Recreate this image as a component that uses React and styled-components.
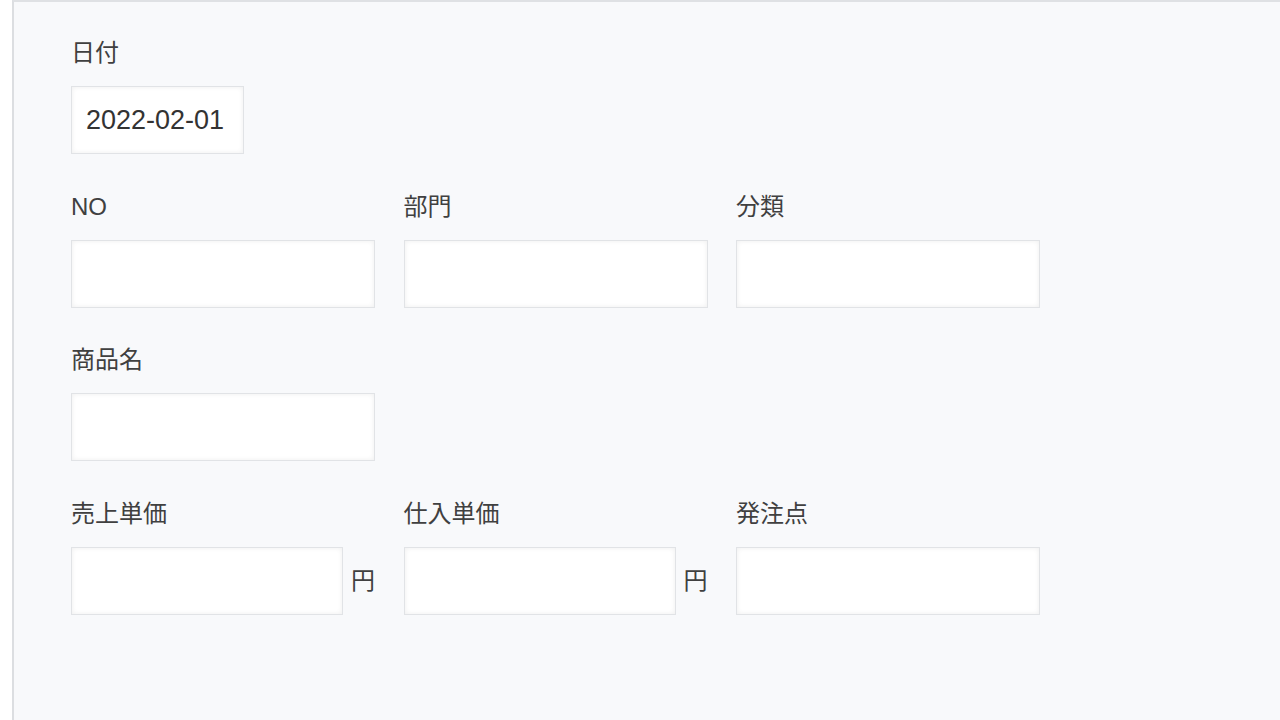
import React from 'react'
import styled, { createGlobalStyle } from 'styled-components'

const GlobalStyle = createGlobalStyle`
    html, body {
        margin: 0;
        padding: 0;
        background: #ffffff;
    }
    body {
        font-family: "Liberation Sans", "Noto Sans CJK JP", sans-serif;
        color: #3b3b3b;
    }
`

const Page = styled.div`
    height: 720px;
    padding-left: 12px;
    box-sizing: border-box;
    overflow: hidden;
`

const Panel = styled.div`
    height: 100%;
    box-sizing: border-box;
    background: #f8f9fb;
    border-top: 2px solid #dfe1e4;
    border-left: 2px solid #dcdee1;
    padding: 39px 0 0 57px;
    display: flex;
    flex-direction: column;
    gap: 40.5px;
`

const Row = styled.div`
    display: grid;
    grid-template-columns: repeat(3, 304px);
    column-gap: 28.5px;
`

const Field = styled.div`
    display: flex;
    flex-direction: column;
    gap: 21px;
`

const Label = styled.label`
    font-size: 24px;
    line-height: 24px;
    height: 24px;
    color: #404040;
    white-space: nowrap;
`

const Control = styled.div`
    display: flex;
    align-items: center;
    gap: 8px;
`

const Input = styled.input`
    box-sizing: border-box;
    height: 68px;
    width: ${p => p.$width || '100%'};
    flex: ${p => p.$width ? 'none' : '1'};
    min-width: 0;
    margin: 0;
    padding: 0 14px;
    background: #ffffff;
    border: 1px solid #e1e3e6;
    border-radius: 0;
    box-shadow: inset 0 0 5px rgba(0, 0, 0, 0.07);
    font-family: "Liberation Sans", "Noto Sans CJK JP", sans-serif;
    font-size: 27px;
    color: #333333;
    outline: none;
`

const Unit = styled.span`
    font-size: 24px;
    line-height: 24px;
    color: #404040;
    flex: none;
`

const FormField = ({ label, unit, value, width }) => (
    <Field>
        <Label>{label}</Label>
        <Control>
            <Input $width={width} defaultValue={value} />
            {unit && <Unit>{unit}</Unit>}
        </Control>
    </Field>
)

export default function App() {
    return (
        <Page>
            <GlobalStyle />
            <Panel>
                <Row>
                    <FormField label="日付" value="2022-02-01" width="173px" />
                </Row>
                <Row>
                    <FormField label="NO" />
                    <FormField label="部門" />
                    <FormField label="分類" />
                </Row>
                <Row>
                    <FormField label="商品名" />
                </Row>
                <Row>
                    <FormField label="売上単価" unit="円" />
                    <FormField label="仕入単価" unit="円" />
                    <FormField label="発注点" />
                </Row>
            </Panel>
        </Page>
    )
}
